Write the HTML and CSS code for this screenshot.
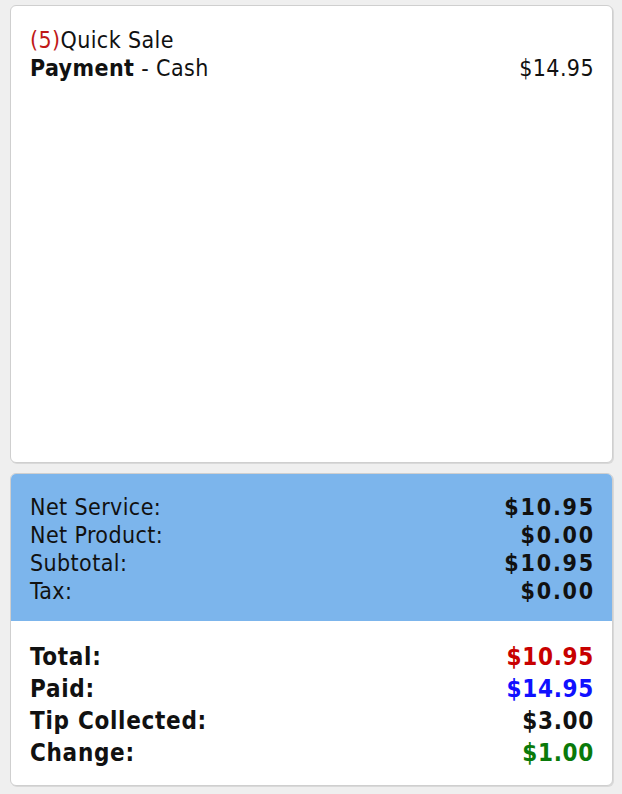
FILE: index.html
```html
<!DOCTYPE html>
<html lang="en">
<head>
    <meta charset="UTF-8">
    <meta name="viewport" content="width=device-width, initial-scale=1.0">
    <title>Quick Sale</title>
    <link rel="stylesheet" href="styles.css">
</head>
<body>
    <div class="ticket">
        <div class="ticket-title"><span class="ticket-num">(5)</span>Quick Sale</div>
        <div class="line">
            <span><strong>Payment</strong> - Cash</span>
            <span>$14.95</span>
        </div>
    </div>

    <div class="totals">
        <div class="summary">
            <div class="line"><span>Net Service:</span><strong>$10.95</strong></div>
            <div class="line"><span>Net Product:</span><strong>$0.00</strong></div>
            <div class="line"><span>Subtotal:</span><strong>$10.95</strong></div>
            <div class="line"><span>Tax:</span><strong>$0.00</strong></div>
        </div>
        <div class="grand">
            <div class="line"><span>Total:</span><span class="red">$10.95</span></div>
            <div class="line"><span>Paid:</span><span class="blue">$14.95</span></div>
            <div class="line"><span>Tip Collected:</span><span>$3.00</span></div>
            <div class="line"><span>Change:</span><span class="green">$1.00</span></div>
        </div>
    </div>
</body>
</html>
```

FILE: styles.css
```css
body {
    font-family: "DejaVu Sans Condensed", "DejaVu Sans", sans-serif;
    font-size: 23px;
    letter-spacing: 0.4px;
    color: #111;
    margin: 0;
    padding: 5px 9px 8px 10px;
    background-color: #efefef;
}
strong {
    letter-spacing: 0.4px;
}
.ticket {
    height: 416px;
    padding: 20px 18px 20px 19px;
    background-color: #fff;
    border: 1px solid #cfcfcf;
    border-radius: 6px;
    box-shadow: 1px 1px 0 #d9d9d9;
}
.ticket-title {
    line-height: 28px;
}
.ticket-num {
    color: #c01818;
}
.line {
    display: flex;
    justify-content: space-between;
    line-height: 28px;
}
.totals {
    margin-top: 10px;
    background-color: #fff;
    border: 1px solid #cfcfcf;
    border-radius: 6px;
    box-shadow: 1px 1px 0 #d9d9d9;
    overflow: hidden;
}
.summary {
    background-color: #7cb5ec;
    padding: 19px 18px 16px 19px;
}
.summary strong {
    letter-spacing: 1.8px;
    margin-right: -1px;
}
.grand {
    padding: 20px 18px 16px 19px;
    font-size: 24px;
    font-weight: bold;
    letter-spacing: 0.7px;
}
.grand .line {
    line-height: 32px;
}
.red {
    color: #c80000;
}
.blue {
    color: #1010ff;
}
.green {
    color: #0a7a0a;
}
```
